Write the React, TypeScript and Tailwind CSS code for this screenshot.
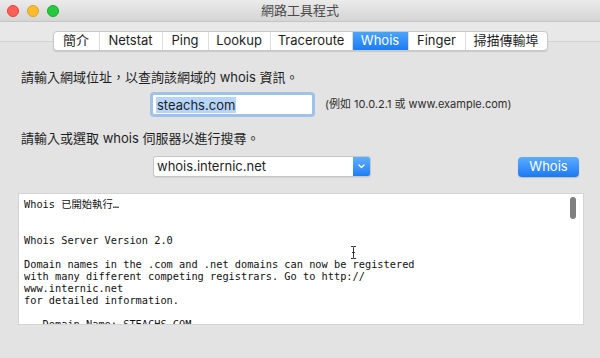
import React from "react";

const ui = { fontFamily: 'Inter, "Noto Sans CJK TC", "Liberation Sans", sans-serif' };
const mono = { fontFamily: '"DejaVu Sans Mono", "Liberation Mono", "Noto Sans CJK TC", monospace' };

const tabs: { label: string; w: number; active?: boolean }[] = [
  { label: "簡介", w: 45 },
  { label: "Netstat", w: 63 },
  { label: "Ping", w: 46 },
  { label: "Lookup", w: 62 },
  { label: "Traceroute", w: 82 },
  { label: "Whois", w: 56, active: true },
  { label: "Finger", w: 57 },
  { label: "掃描傳輸埠", w: 82 },
];

const lines = [
  "Whois 已開始執行…",
  "",
  "",
  "Whois Server Version 2.0",
  "",
  "Domain names in the .com and .net domains can now be registered",
  "with many different competing registrars. Go to http://",
  "www.internic.net",
  "for detailed information.",
  "",
  "   Domain Name: STEACHS.COM",
];

export default function App() {
  return (
    <div className="w-[600px] h-[358px] bg-[#e3e3e3] overflow-hidden relative text-[#1e1e1e]" style={ui}>
      {/* title bar */}
      <div className="h-[22px] bg-gradient-to-b from-[#ebebeb] to-[#d5d5d5] border-b border-[#c4c4c4] flex items-center relative">
        <div className="flex items-center gap-[8px] pl-[7px]">
          <div className="w-[12px] h-[12px] rounded-full bg-[#fc5f57] border border-[#e0443e]" />
          <div className="w-[12px] h-[12px] rounded-full bg-[#fdbc2e] border border-[#dea123]" />
          <div className="w-[12px] h-[12px] rounded-full bg-[#28c840] border border-[#1aab29]" />
        </div>
        <div className="absolute inset-0 flex items-center justify-center text-[13px] text-[#4a4a4a]">網路工具程式</div>
      </div>
      {/* tab area */}
      <div className="h-[19px] bg-[#e8e8e8]" />
      <div className="border-t border-[#d2d2d2] bg-[#e3e3e3] relative">
        <div className="absolute left-0 right-0 -top-[11px] flex justify-center">
          <div className="flex h-[20px] bg-white rounded-[4px] border border-[#c8c8c8] shadow-[0_1px_1px_rgba(0,0,0,0.12)] overflow-hidden">
            {tabs.map((t, i) => (
              <div
                key={t.label}
                style={{ width: t.w }}
                className={
                  "h-full flex items-center justify-center text-[13px] " +
                  (i > 0 ? "border-l border-[#dcdcdc] " : "") +
                  (t.active ? "bg-gradient-to-b from-[#4aa3fd] to-[#1a7cf5] text-white" : "text-[#1e1e1e]")
                }
              >
                {t.label}
              </div>
            ))}
          </div>
        </div>
        {/* content */}
        <div className="pt-[27px] px-[21px]">
          <div className="text-[13px] leading-[16px]">請輸入網域位址，以查詢該網域的 whois 資訊。</div>
          <div className="flex items-center mt-[9px]">
            <div className="ml-[131px] w-[161px] h-[21px] bg-white border border-[#9cc3f0] shadow-[0_0_0_2px_rgba(110,165,235,0.55)] rounded-[2px] flex items-center pl-[3px]">
              <span className="bg-[#b5d5fd] text-[13px] leading-[16px] px-[1px] text-[#1e1e1e]">steachs.com</span>
            </div>
            <div className="ml-[12px] text-[11px] text-[#2e2e2e]">(例如 10.0.2.1 或 www.example.com)</div>
          </div>
          <div className="text-[13px] leading-[16px] mt-[15px]">請輸入或選取 whois 伺服器以進行搜尋。</div>
          <div className="flex items-center mt-[10px]">
            <div className="ml-[132px] w-[218px] h-[21px] flex bg-white border border-[#c5c5c5] rounded-[3px] shadow-[0_1px_0_rgba(0,0,0,0.06)] overflow-hidden">
              <div className="flex-1 flex items-center pl-[3px] text-[13px]">whois.internic.net</div>
              <div className="w-[17px] h-full bg-gradient-to-b from-[#5eaefd] to-[#1c7ef5] flex items-center justify-center">
                <svg width="7" height="5" viewBox="0 0 7 5">
                  <path d="M1 1 L3.5 3.5 L6 1" fill="none" stroke="white" strokeWidth="1.3" strokeLinecap="round" strokeLinejoin="round" />
                </svg>
              </div>
            </div>
            <div className="ml-[147px] w-[61px] h-[20px] rounded-[4px] bg-gradient-to-b from-[#5cacfd] to-[#1878f5] shadow-[0_1px_1px_rgba(0,0,0,0.18)] flex items-center justify-center text-white text-[13px]">
              Whois
            </div>
          </div>
        </div>
        {/* output */}
        <div className="ml-[18px] w-[566px] mt-[16px] h-[132px] bg-white border border-[#d4d4d4] relative overflow-hidden">
          <div className="pl-[5px] pt-[4px] text-[10.3px] leading-[12px] text-[#111] whitespace-pre" style={mono}>
            {lines.map((l, i) => (
              <div key={i} className="h-[12px]">{l}</div>
            ))}
          </div>
          <div className="absolute right-[7px] top-[3px] w-[6px] h-[22px] rounded-full bg-[#7f7f7f]" />
          <svg className="absolute left-[331px] top-[52px]" width="7" height="13" viewBox="0 0 7 13">
            <path d="M1 0.5 H3 Q3.5 0.5 3.5 1.5 V11.5 Q3.5 12.5 3 12.5 H1 M6 0.5 H4 Q3.5 0.5 3.5 1.5 M3.5 11.5 Q3.5 12.5 4 12.5 H6 M2 6.5 H5" fill="none" stroke="#333" strokeWidth="1" />
          </svg>
        </div>
      </div>
    </div>
  );
}
